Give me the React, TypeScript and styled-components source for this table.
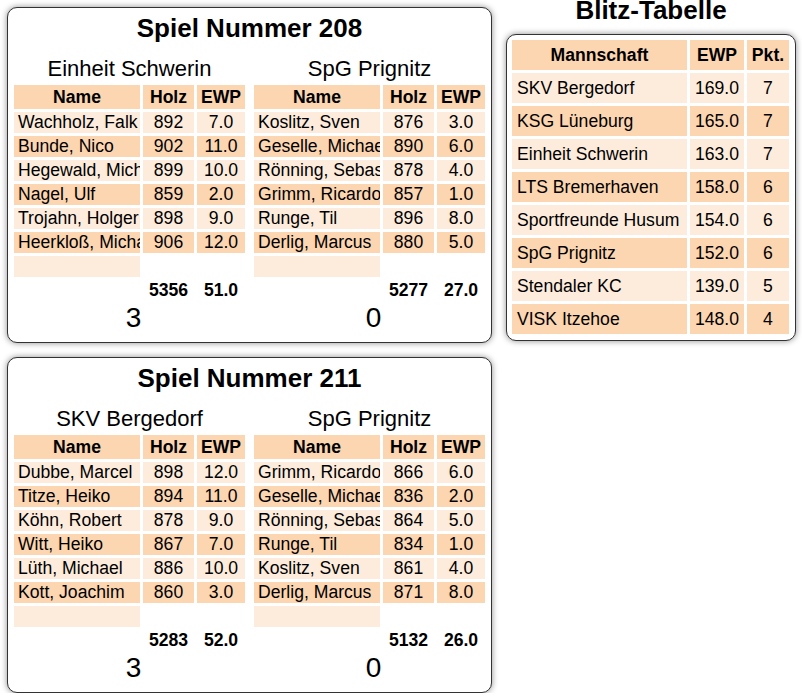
import styled, { createGlobalStyle } from 'styled-components';

const GlobalStyle = createGlobalStyle`
  body {
    margin: 0;
    background: #fff;
    color: #000;
    font-family: "Liberation Sans", Arial, sans-serif;
  }
`;

const PEACH = '#fcd5b1';
const LIGHT = '#fdecdc';

type Tone = 'peach' | 'light' | 'none';

const toneColor = (tone: Tone) => (tone === 'peach' ? PEACH : tone === 'light' ? LIGHT : 'transparent');

const Page = styled.div`
  display: flex;
  align-items: flex-start;
  gap: 14px;
  padding-left: 7px;
`;

const Games = styled.div`
  display: flex;
  flex-direction: column;
  gap: 14px;
  padding-top: 7px;
`;

const Panel = styled.div`
  box-sizing: border-box;
  background: #fff;
  border: 1px solid #333;
  border-radius: 10px;
  box-shadow: 0 0 6px rgba(0, 0, 0, 0.45);
`;

const GameCard = styled(Panel)`
  width: 485px;
  padding: 5px 6px 8px;
`;

const GameTitle = styled.h2`
  margin: 0;
  font-size: 26px;
  line-height: 30px;
  font-weight: bold;
  text-align: center;
`;

const Teams = styled.div`
  display: flex;
  gap: 9px;
  margin-top: 13px;
`;

const TeamColumn = styled.div`
  width: 231px;
  display: flex;
  flex-direction: column;
`;

const TeamName = styled.div`
  font-size: 22px;
  line-height: 26px;
  text-align: center;
  margin-bottom: 3px;
`;

const LineupGrid = styled.div`
  display: grid;
  grid-template-columns: 126px 51px 48px;
  gap: 3px;
  font-size: 17.6px;
`;

const Cell = styled.div<{ $tone: Tone; $head?: boolean; $left?: boolean }>`
  background: ${p => toneColor(p.$tone)};
  height: ${p => (p.$head ? 24 : 21)}px;
  line-height: ${p => (p.$head ? 24 : 21)}px;
  font-weight: ${p => (p.$head ? 'bold' : 'normal')};
  text-align: ${p => (p.$left ? 'left' : 'center')};
  padding-left: ${p => (p.$left ? 4 : 0)}px;
  white-space: nowrap;
  overflow: hidden;
`;

const TotalCell = styled.div`
  height: 21px;
  line-height: 21px;
  font-weight: bold;
  text-align: center;
`;

const Score = styled.div`
  margin-top: 1px;
  font-size: 28px;
  line-height: 32px;
  text-align: center;
  padding-left: 8px;
`;

const Standings = styled.div`
  display: flex;
  flex-direction: column;
`;

const StandingsTitle = styled.h2`
  margin: -2px 0 12px;
  font-size: 26px;
  line-height: 24px;
  font-weight: bold;
  text-align: center;
`;

const StandingsBox = styled(Panel)`
  width: 290px;
  padding: 5px 6px 6px 5px;
`;

const StandingsGrid = styled.div`
  display: grid;
  grid-template-columns: 175px 54px 42px;
  gap: 3px;
  font-size: 17.6px;
`;

const StandingsCell = styled.div<{ $tone: Tone; $head?: boolean; $left?: boolean }>`
  background: ${p => toneColor(p.$tone)};
  height: 30px;
  line-height: 30px;
  font-weight: ${p => (p.$head ? 'bold' : 'normal')};
  text-align: ${p => (p.$left ? 'left' : 'center')};
  padding-left: ${p => (p.$left ? 5 : 0)}px;
  white-space: nowrap;
  overflow: hidden;
`;

type Player = [string, number, string];

interface Side {
  team: string;
  players: Player[];
  holz: number;
  ewp: string;
  score: number;
}

interface Game {
  nr: number;
  sides: [Side, Side];
}

const games: Game[] = [
  {
    nr: 208,
    sides: [
      {
        team: 'Einheit Schwerin',
        players: [
          ['Wachholz, Falk', 892, '7.0'],
          ['Bunde, Nico', 902, '11.0'],
          ['Hegewald, Michael', 899, '10.0'],
          ['Nagel, Ulf', 859, '2.0'],
          ['Trojahn, Holger', 898, '9.0'],
          ['Heerkloß, Michael', 906, '12.0'],
        ],
        holz: 5356,
        ewp: '51.0',
        score: 3,
      },
      {
        team: 'SpG Prignitz',
        players: [
          ['Koslitz, Sven', 876, '3.0'],
          ['Geselle, Michael', 890, '6.0'],
          ['Rönning, Sebastian', 878, '4.0'],
          ['Grimm, Ricardo', 857, '1.0'],
          ['Runge, Til', 896, '8.0'],
          ['Derlig, Marcus', 880, '5.0'],
        ],
        holz: 5277,
        ewp: '27.0',
        score: 0,
      },
    ],
  },
  {
    nr: 211,
    sides: [
      {
        team: 'SKV Bergedorf',
        players: [
          ['Dubbe, Marcel', 898, '12.0'],
          ['Titze, Heiko', 894, '11.0'],
          ['Köhn, Robert', 878, '9.0'],
          ['Witt, Heiko', 867, '7.0'],
          ['Lüth, Michael', 886, '10.0'],
          ['Kott, Joachim', 860, '3.0'],
        ],
        holz: 5283,
        ewp: '52.0',
        score: 3,
      },
      {
        team: 'SpG Prignitz',
        players: [
          ['Grimm, Ricardo', 866, '6.0'],
          ['Geselle, Michael', 836, '2.0'],
          ['Rönning, Sebastian', 864, '5.0'],
          ['Runge, Til', 834, '1.0'],
          ['Koslitz, Sven', 861, '4.0'],
          ['Derlig, Marcus', 871, '8.0'],
        ],
        holz: 5132,
        ewp: '26.0',
        score: 0,
      },
    ],
  },
];

const table: [string, string, number][] = [
  ['SKV Bergedorf', '169.0', 7],
  ['KSG Lüneburg', '165.0', 7],
  ['Einheit Schwerin', '163.0', 7],
  ['LTS Bremerhaven', '158.0', 6],
  ['Sportfreunde Husum', '154.0', 6],
  ['SpG Prignitz', '152.0', 6],
  ['Stendaler KC', '139.0', 5],
  ['VISK Itzehoe', '148.0', 4],
];

const rowTone = (i: number): Tone => (i % 2 === 0 ? 'light' : 'peach');

const Lineup = ({ side }: { side: Side }) => (
  <TeamColumn>
    <TeamName>{side.team}</TeamName>
    <LineupGrid>
      <Cell $tone="peach" $head>Name</Cell>
      <Cell $tone="peach" $head>Holz</Cell>
      <Cell $tone="peach" $head>EWP</Cell>
      {side.players.map(([name, holz, ewp], i) => (
        <>
          <Cell key={name} $tone={rowTone(i)} $left>{name}</Cell>
          <Cell $tone={rowTone(i)}>{holz}</Cell>
          <Cell $tone={rowTone(i)}>{ewp}</Cell>
        </>
      ))}
      <Cell $tone="light" $left />
      <Cell $tone="none" />
      <Cell $tone="none" />
      <div />
      <TotalCell>{side.holz}</TotalCell>
      <TotalCell>{side.ewp}</TotalCell>
    </LineupGrid>
    <Score>{side.score}</Score>
  </TeamColumn>
);

const App = () => (
  <>
    <GlobalStyle />
    <Page>
      <Games>
        {games.map(game => (
          <GameCard key={game.nr}>
            <GameTitle>Spiel Nummer {game.nr}</GameTitle>
            <Teams>
              <Lineup side={game.sides[0]} />
              <Lineup side={game.sides[1]} />
            </Teams>
          </GameCard>
        ))}
      </Games>
      <Standings>
        <StandingsTitle>Blitz-Tabelle</StandingsTitle>
        <StandingsBox>
          <StandingsGrid>
            <StandingsCell $tone="peach" $head>Mannschaft</StandingsCell>
            <StandingsCell $tone="peach" $head>EWP</StandingsCell>
            <StandingsCell $tone="peach" $head>Pkt.</StandingsCell>
            {table.map(([team, ewp, pkt], i) => (
              <>
                <StandingsCell key={team} $tone={rowTone(i)} $left>{team}</StandingsCell>
                <StandingsCell $tone={rowTone(i)}>{ewp}</StandingsCell>
                <StandingsCell $tone={rowTone(i)}>{pkt}</StandingsCell>
              </>
            ))}
          </StandingsGrid>
        </StandingsBox>
      </Standings>
    </Page>
  </>
);

export default App;
